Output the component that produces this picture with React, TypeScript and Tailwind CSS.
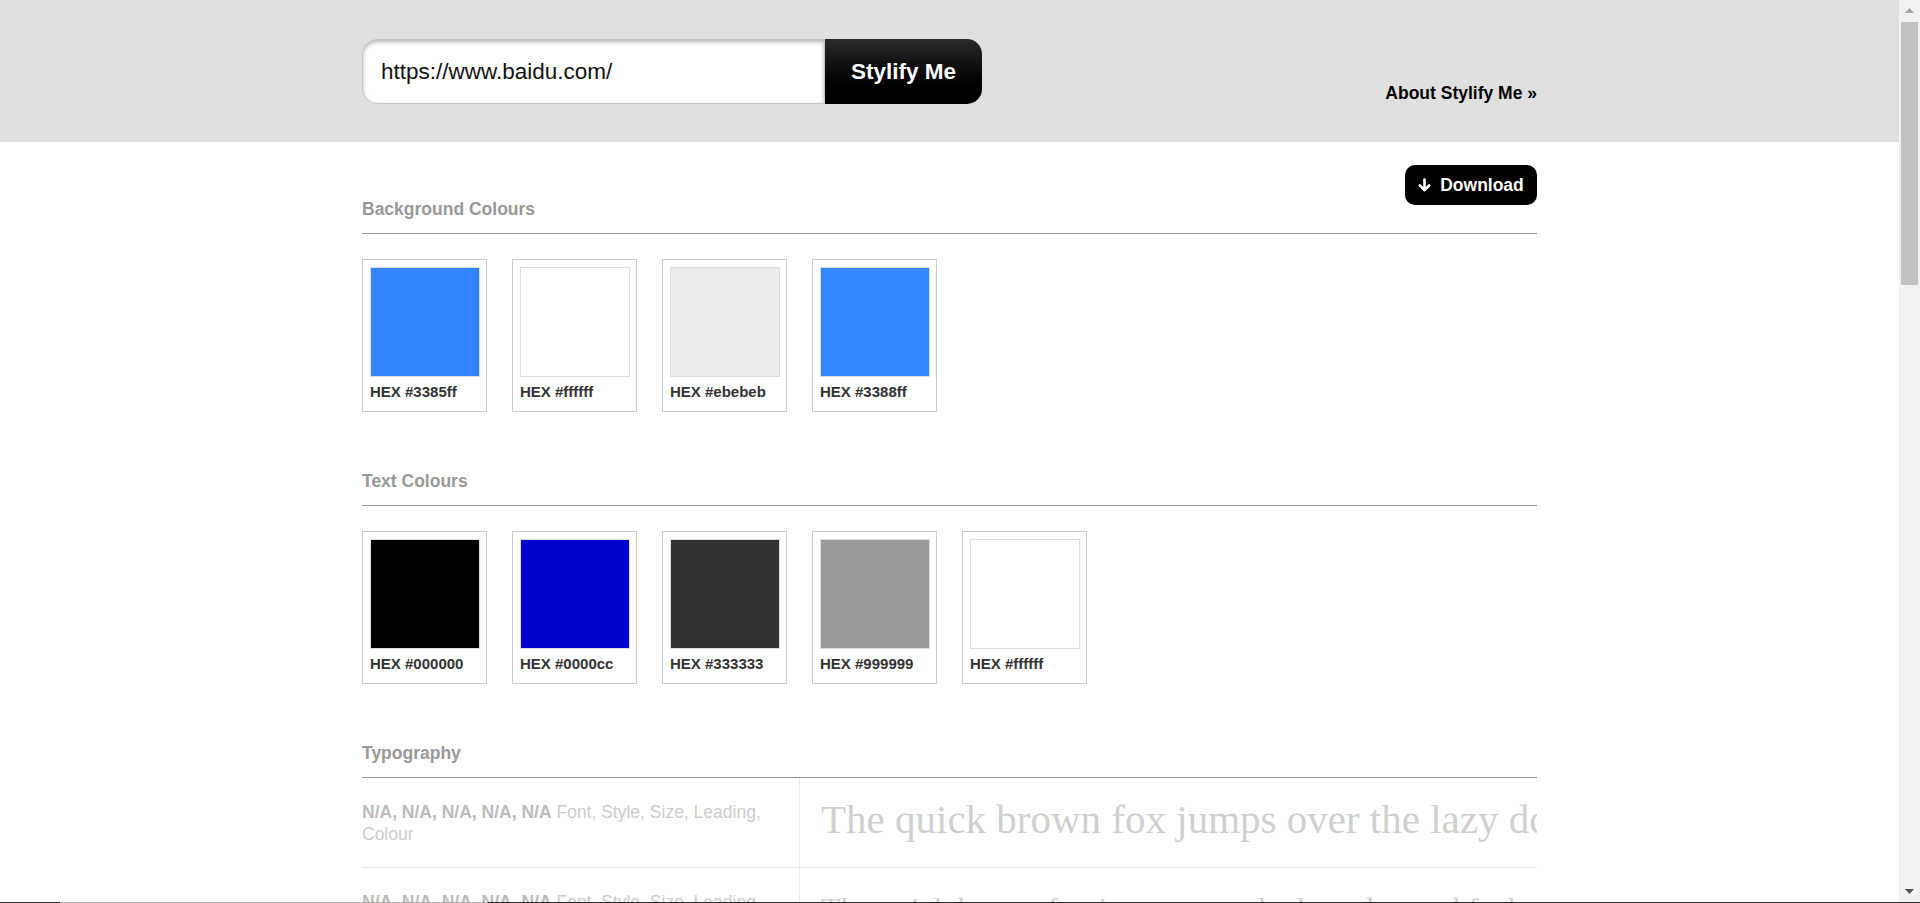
import React from "react";

const bgColours = ["#3385ff", "#ffffff", "#ebebeb", "#3388ff"];
const textColours = ["#000000", "#0000cc", "#333333", "#999999", "#ffffff"];

function Swatch({ hex }: { hex: string }) {
  return (
    <div className="w-[125px] h-[153px] border border-[#cccccc] pt-[7px] pl-[7px] pr-[6px] bg-white">
      <div className="w-[110px] h-[110px] border border-[#dddddd]" style={{ backgroundColor: hex }} />
      <div className="mt-[6px] text-[15px] leading-[18px] font-bold text-[#333333] whitespace-nowrap">HEX {hex}</div>
    </div>
  );
}

function TypeRow({ size, text }: { size: "lg" | "md"; text: string }) {
  return (
    <div className="flex border-b border-[#e6e6e6]">
      <div className="w-[438px] shrink-0 border-r border-[#eeeeee] pt-[23px] pr-[30px] text-[17.5px] leading-[22px] text-[#cccccc]">
        <span className="font-bold text-[#bbbbbb]">N/A, N/A, N/A, N/A, N/A</span> Font, Style, Size, Leading, Colour
      </div>
      <div className="flex-1 min-w-0 overflow-hidden pl-[21px] pt-[18px] pb-[25px]">
        <div
          className={
            size === "lg"
              ? "font-['Liberation_Serif',serif] text-[41px] leading-[46px] text-[#cfcfcf] whitespace-nowrap"
              : "font-['Liberation_Serif',serif] text-[32px] leading-[46px] text-[#cfcfcf] whitespace-nowrap"
          }
        >
          {text}
        </div>
      </div>
    </div>
  );
}

export default function App() {
  return (
    <div className="w-[1920px] h-[903px] flex flex-col overflow-hidden bg-white font-['Liberation_Sans',Arial,sans-serif]">
      <div className="flex flex-1 min-h-0">
        {/* page */}
        <div className="flex-1 min-w-0 overflow-hidden">
          {/* header */}
          <div className="h-[142px] bg-[#e0e0e0]">
            <div className="w-[1175px] mx-auto pt-[39px] flex justify-between items-start">
              <div className="flex h-[65px]">
                <div className="w-[463px] h-full bg-white rounded-l-[15px] border border-[#c4c4c4] shadow-[inset_0_2px_4px_rgba(0,0,0,0.3)] flex items-center pl-[18px] text-[22.5px] text-[#111111]">
                  https://www.baidu.com/
                </div>
                <div className="w-[157px] h-full rounded-r-[15px] bg-linear-to-b from-[#2b2b2b] to-[#000000] text-white font-bold text-[22.5px] flex items-center justify-center">
                  Stylify Me
                </div>
              </div>
              <div className="mt-[44px] text-[17.5px] leading-[20px] font-bold text-black">About Stylify Me »</div>
            </div>
          </div>

          {/* content */}
          <div className="w-[1175px] mx-auto pt-[23px]">
            {/* Background colours */}
            <div className="border-b border-[#999999] pb-[14px] flex justify-between items-start">
              <h2 className="mt-[34px] text-[17.5px] leading-[20px] font-bold text-[#999999]">Background Colours</h2>
              <div className="h-[40px] w-[132px] rounded-[10px] bg-black text-white font-bold text-[17.5px] flex items-center justify-center gap-[9px]">
                <svg width="13" height="14" viewBox="0 0 13 14" fill="none">
                  <path d="M6.5 1.5V12" stroke="white" strokeWidth="2.6" strokeLinecap="round" />
                  <path d="M1.8 7.5L6.5 12.2L11.2 7.5" stroke="white" strokeWidth="2.6" strokeLinecap="round" strokeLinejoin="round" />
                </svg>
                <span>Download</span>
              </div>
            </div>
            <div className="mt-[25px] flex gap-[25px]">
              {bgColours.map((h, i) => (
                <Swatch key={i} hex={h} />
              ))}
            </div>

            {/* Text colours */}
            <div className="mt-[59px] border-b border-[#999999] pb-[14px]">
              <h2 className="text-[17.5px] leading-[20px] font-bold text-[#999999]">Text Colours</h2>
            </div>
            <div className="mt-[25px] flex gap-[25px]">
              {textColours.map((h, i) => (
                <Swatch key={i} hex={h} />
              ))}
            </div>

            {/* Typography */}
            <div className="mt-[59px] border-b border-[#999999] pb-[14px]">
              <h2 className="text-[17.5px] leading-[20px] font-bold text-[#999999]">Typography</h2>
            </div>
            <TypeRow size="lg" text="The quick brown fox jumps over the lazy dog and feels" />
            <TypeRow size="md" text="The quick brown fox jumps over the lazy dog and feels" />
            <TypeRow size="md" text="The quick brown fox jumps over the lazy dog and feels" />
          </div>
        </div>

        {/* scrollbar */}
        <div className="w-[21px] shrink-0 bg-[#f1f1f1] flex flex-col items-center">
          <div className="h-[21px] w-full flex items-center justify-center">
            <svg width="9" height="5" viewBox="0 0 9 5">
              <path d="M0 5L4.5 0L9 5Z" fill="#a3a3a3" />
            </svg>
          </div>
          <div className="mt-[1px] w-[17px] h-[263px] bg-[#c1c1c1]" />
          <div className="flex-1" />
          <div className="h-[21px] w-full flex items-center justify-center">
            <svg width="9" height="5" viewBox="0 0 9 5">
              <path d="M0 0L9 0L4.5 5Z" fill="#505050" />
            </svg>
          </div>
        </div>
      </div>
      {/* bottom edge line */}
      <div className="h-[1px] flex shrink-0">
        <div className="w-[60px] bg-[#2b2b2b]" />
        <div className="w-[428px] bg-[#b0b0b0]" />
        <div className="flex-1 bg-[#2b2b2b]" />
      </div>
    </div>
  );
}
